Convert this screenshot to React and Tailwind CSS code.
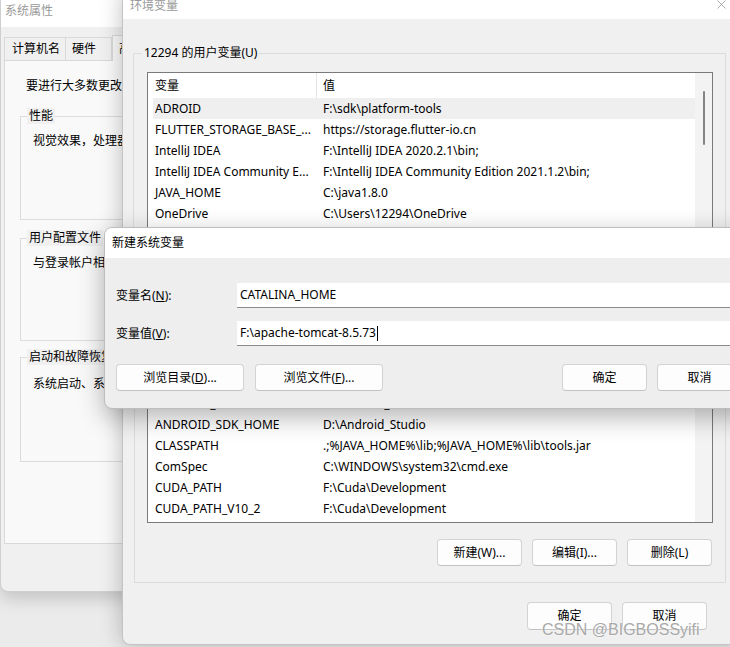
import { X } from 'lucide-react'

const userVars = [
  ['ADROID', 'F:\\sdk\\platform-tools'],
  ['FLUTTER_STORAGE_BASE_...', 'https://storage.flutter-io.cn'],
  ['IntelliJ IDEA', 'F:\\IntelliJ IDEA 2020.2.1\\bin;'],
  ['IntelliJ IDEA Community E...', 'F:\\IntelliJ IDEA Community Edition 2021.1.2\\bin;'],
  ['JAVA_HOME', 'C:\\java1.8.0'],
  ['OneDrive', 'C:\\Users\\12294\\OneDrive'],
  ['Path', 'F:\\Cuda\\Development\\bin;F:\\Cuda\\Development\\libnvvp;'],
]

const sysVars = [
  ['ACSetupSvcPort', '23210'],
  ['ACSvcPort', '17532'],
  ['ANDROID_HOME', 'D:\\Android_Studio\\sdk'],
  ['ANDROID_SDK_HOME', 'D:\\Android_Studio'],
  ['CLASSPATH', '.;%JAVA_HOME%\\lib;%JAVA_HOME%\\lib\\tools.jar'],
  ['ComSpec', 'C:\\WINDOWS\\system32\\cmd.exe'],
  ['CUDA_PATH', 'F:\\Cuda\\Development'],
  ['CUDA_PATH_V10_2', 'F:\\Cuda\\Development'],
]

function Btn({ children, w = 'w-[85px]', h = 'h-[27px]' }) {
  return (
    <div className={`${w} ${h} flex items-center justify-center rounded-[4px] border border-[#d3d3d3] border-b-[#c2c2c2] bg-[#fdfdfd] text-[12px] text-black`}>
      {children}
    </div>
  )
}

// group box with its caption sitting on the top border
function Group({ label, className, labelPos = 'left-[8px]', children }) {
  return (
    <div className={`relative border border-[#dcdcdc] ${className}`}>
      <span className={`absolute -top-[9px] ${labelPos} bg-[#f0f0f0] px-[2px] text-[12px] leading-[16px] text-black whitespace-nowrap`}>{label}</span>
      {children}
    </div>
  )
}

function VarList({ rows, height, hovered, thumb }) {
  return (
    <div className={`flex ${height} border border-[#7a7a7a] bg-white`}>
      <div className="flex-1 pl-[5px] overflow-hidden">
        <div className="flex h-[25px] items-center text-[12px] text-black">
          <div className="w-[163px] pl-[2px]">变量</div>
          <div className="h-full border-l border-[#e5e5e5]" />
          <div className="pl-[6px]">值</div>
        </div>
        {rows.map(([k, v], i) => (
          <div key={k} className={`flex h-[21px] items-center text-[12px] text-black whitespace-nowrap ${i === hovered ? 'bg-[#efefef]' : ''}`}>
            <div className="w-[163px] pl-[2px] overflow-hidden">{k}</div>
            <div className="pl-[7px]">{v}</div>
          </div>
        ))}
      </div>
      <div className="w-[17px] bg-[#f3f3f3] flex justify-center">
        {thumb && <div className="mt-[18px] w-[2px] h-[54px] rounded-full bg-[#858585]" />}
      </div>
    </div>
  )
}

function SystemProps() {
  return (
    <div className="absolute left-0 top-[-6px] w-[430px] h-[598px] flex flex-col rounded-b-[8px] border border-[#cfcfcf] bg-[#f0f0f0] shadow-[0_6px_18px_rgba(0,0,0,0.18)] overflow-hidden">
      <div className="h-[32px] flex items-end pb-[7px] pl-[4px] bg-white text-[12px] text-[#9a9a9a]">系统属性</div>
      <div className="flex items-end h-[33px] pl-[3px] text-[12px] text-black">
        <div className="h-[23px] pl-[7px] pr-[5px] flex items-center border border-b-0 border-[#d9d9d9] bg-[#f0f0f0]">计算机名</div>
        <div className="h-[23px] pl-[6px] pr-[15px] flex items-center border border-b-0 border-l-0 border-[#d9d9d9] bg-[#f0f0f0]">硬件</div>
        <div className="h-[26px] px-[6px] flex items-center border border-b-0 border-[#d9d9d9] bg-[#f9f9f9] -mb-px relative">高级</div>
        <div className="h-[23px] px-[8px] flex items-center border border-b-0 border-l-0 border-[#d9d9d9] bg-[#f0f0f0]">系统保护</div>
        <div className="h-[23px] px-[8px] flex items-center border border-b-0 border-l-0 border-[#d9d9d9] bg-[#f0f0f0]">远程</div>
      </div>
      <div className="ml-[3px] w-[420px] h-[484px] border border-[#d9d9d9] bg-[#f9f9f9] pl-[15px] text-[12px] text-black">
        <div className="pl-[6px] pt-[17px] leading-[16px] whitespace-nowrap">要进行大多数更改，你必须作为管理员登录。</div>
        <Group label="性能" labelPos="left-[6px]" className="mt-[22px] h-[104px]">
          <div className="pl-[12px] pt-[16px] leading-[16px] whitespace-nowrap">视觉效果，处理器计划，内存使用，以及虚拟内存</div>
        </Group>
        <Group label="用户配置文件" labelPos="left-[6px]" className="mt-[18px] h-[103px]">
          <div className="pl-[12px] pt-[16px] leading-[16px] whitespace-nowrap">与登录帐户相关的桌面设置</div>
        </Group>
        <Group label="启动和故障恢复" labelPos="left-[6px]" className="mt-[16px] h-[105px]">
          <div className="pl-[12px] pt-[18px] leading-[16px] whitespace-nowrap">系统启动、系统故障和调试信息</div>
        </Group>
      </div>
    </div>
  )
}

function EnvVars() {
  return (
    <div className="absolute left-[122px] top-[-8px] w-[620px] h-[653px] flex flex-col rounded-bl-[8px] border-l border-b border-[#c4c4c4] bg-[#f0f0f0] shadow-[0_0_22px_rgba(0,0,0,0.25)] overflow-hidden">
      <div className="h-[27px] flex items-center justify-between bg-white pl-[7px] pr-[13px] text-[12px] text-[#9a9a9a]">
        <span>环境变量</span>
        <X size={15} strokeWidth={1} className="text-[#7a7a7a] -mt-[3px]" />
      </div>
      <Group label="12294 的用户变量(U)" className="ml-[10px] mr-[16px] mt-[34px] pt-[18px] pl-[13px] pr-[12px] pb-[12px]">
        <VarList rows={userVars} height="h-[168px]" hovered={0} thumb />
        <div className="mt-[9px] flex justify-end gap-[10px] pr-[1px]">
          <Btn>新建(N)...</Btn>
          <Btn>编辑(E)...</Btn>
          <Btn>删除(D)</Btn>
        </div>
      </Group>
      <Group label="系统变量(S)" className="ml-[11px] mr-[16px] mt-[12px] pt-[23px] pl-[12px] pr-[12px] pb-[16px]">
        <VarList rows={sysVars} height="h-[198px]" />
        <div className="mt-[16px] flex justify-end gap-[10px] pr-[1px]">
          <Btn>新建(W)...</Btn>
          <Btn>编辑(I)...</Btn>
          <Btn>删除(L)</Btn>
        </div>
      </Group>
      <div className="mt-[19px] flex justify-end gap-[10px] pr-[35px]">
        <Btn h="h-[28px]">确定</Btn>
        <Btn h="h-[28px]">取消</Btn>
      </div>
    </div>
  )
}

function NewVarDialog() {
  return (
    <div className="absolute left-[104px] top-[227px] w-[650px] h-[182px] flex flex-col rounded-[8px] border border-[#bdbdbd] bg-[#eeeeee] shadow-[0_8px_26px_rgba(0,0,0,0.3)] overflow-hidden text-[12px] text-black">
      <div className="h-[30px] flex items-center bg-white pl-[7px]">新建系统变量</div>
      <div className="flex flex-col pl-[11px] pr-[11px] pt-[25px]">
        <div className="flex items-center">
          <div className="w-[121px]">变量名(<u>N</u>):</div>
          <div className="flex-1 h-[25px] flex items-center bg-white border-b border-[#8b8b8b] pl-[3px]">CATALINA_HOME</div>
        </div>
        <div className="mt-[13px] flex items-center">
          <div className="w-[121px]">变量值(<u>V</u>):</div>
          <div className="flex-1 h-[25px] flex items-center bg-white border-b border-[#8b8b8b] pl-[3px]">
            F:\apache-tomcat-8.5.73<span className="ml-px w-px h-[15px] bg-black" />
          </div>
        </div>
        <div className="mt-[18px] flex items-center">
          <Btn w="w-[128px]">浏览目录(<u>D</u>)...</Btn>
          <div className="ml-[11px]"><Btn w="w-[128px]">浏览文件(<u>F</u>)...</Btn></div>
          <div className="flex-1" />
          <div className="flex gap-[10px]">
            <Btn>确定</Btn>
            <Btn>取消</Btn>
          </div>
        </div>
      </div>
    </div>
  )
}

export default function App() {
  return (
    <div className="relative w-[730px] h-[647px] overflow-hidden bg-[#ebebeb] font-['Noto_Sans','Noto_Sans_CJK_SC',sans-serif]">
      <SystemProps />
      <EnvVars />
      <NewVarDialog />
      <div className="absolute left-[542px] top-[620px] font-['Liberation_Sans',sans-serif] text-[16px] leading-[20px] text-[#a9a9a9] [text-shadow:0_0_2px_#ffffff]">
        CSDN @BIGBOSSyifi
      </div>
    </div>
  )
}
